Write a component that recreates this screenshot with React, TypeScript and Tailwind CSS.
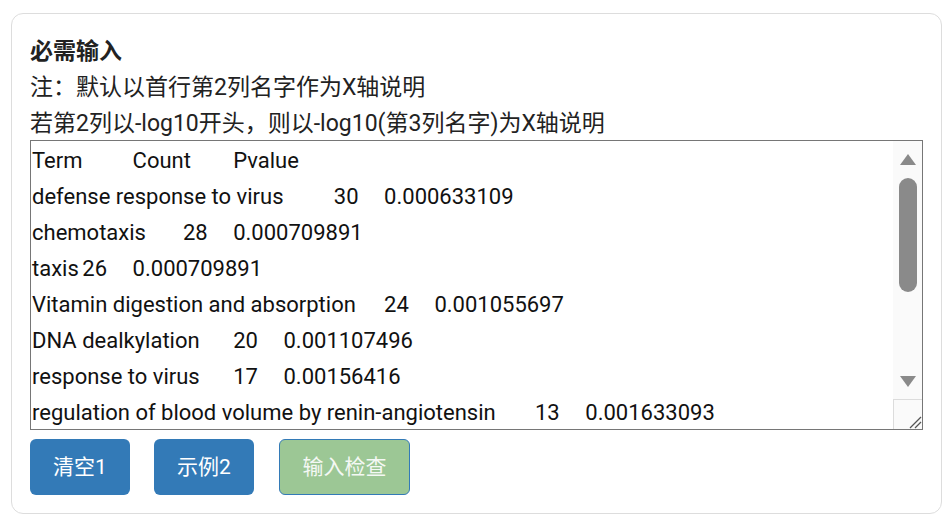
import { useState } from "react";

const SAMPLE = [
  "Term\tCount\tPvalue",
  "defense response to virus\t30\t0.000633109",
  "chemotaxis\t28\t0.000709891",
  "taxis\t26\t0.000709891",
  "Vitamin digestion and absorption\t24\t0.001055697",
  "DNA dealkylation\t20\t0.001107496",
  "response to virus\t17\t0.00156416",
  "regulation of blood volume by renin-angiotensin\t13\t0.001633093",
].join("\n");

const FONT = "font-['Roboto','Noto_Sans_CJK_SC',sans-serif]";

/** 假滚动条：原生滚动条在无头浏览器里太窄，这里画一个跟截图一样的 */
function FakeScrollbar() {
  return (
    <div className="flex w-[29px] shrink-0 flex-col items-center bg-[#fafafa]">
      <svg width="16" height="11" viewBox="0 0 16 11" className="mt-[13px] shrink-0">
        <polygon points="8,0 16,11 0,11" fill="#8a8a8a" />
      </svg>
      <div className="mt-[13px] h-[114px] w-[18px] shrink-0 rounded-full bg-[#8a8a8a]" />
      <div className="flex-1" />
      <svg width="16" height="11" viewBox="0 0 16 11" className="mb-[12px] shrink-0">
        <polygon points="0,0 16,0 8,11" fill="#8a8a8a" />
      </svg>
      <div className="relative h-[30px] w-full border-l border-t border-[#dcdcdc] bg-[#fafafa]">
        <svg width="14" height="14" viewBox="0 0 14 14" className="absolute bottom-0 right-0">
          <line x1="2" y1="13" x2="13" y2="2" stroke="#555" strokeWidth="1.2" />
          <line x1="7" y1="13" x2="13" y2="7" stroke="#555" strokeWidth="1.2" />
        </svg>
      </div>
    </div>
  );
}

export default function App() {
  const [text, setText] = useState(SAMPLE);

  return (
    <div className={`min-h-screen bg-white pl-[11px] pr-[10px] pt-[13px] text-[#222] ${FONT}`}>
      <div className="rounded-[12px] border border-[#dddddd] px-[18px] pb-[18px] pt-[18px]">
        <div className="pt-[2px] text-[23px] leading-[36px]">
          <div className="font-bold">必需输入</div>
          <div>注：默认以首行第2列名字作为X轴说明</div>
          <div className="h-[34px]">若第2列以-log10开头，则以-log10(第3列名字)为X轴说明</div>
        </div>

        <div className="flex h-[290px] border border-[#767676]">
          <textarea
            value={text}
            onChange={(e) => setText(e.target.value)}
            spellCheck={false}
            className={`flex-1 resize-none overflow-hidden whitespace-pre bg-white px-[1px] pb-0 pt-[2px] text-[22px] leading-[36px] text-[#111] outline-none [tab-size:50.3px] ${FONT}`}
          />
          <FakeScrollbar />
        </div>

        <div className="mt-[9px] flex gap-[24px]">
          <button className="h-[56px] w-[100px] rounded-[6px] bg-[#337ab7] pt-[1px] text-[21px] text-white">清空1</button>
          <button className="h-[56px] w-[100px] rounded-[6px] bg-[#337ab7] pt-[1px] text-[21px] text-white">示例2</button>
          <button className="ml-[1px] h-[56px] w-[131px] rounded-[6px] border border-[#337ab7] bg-[#9cc795] pt-[1px] text-[21px] text-[#f4f8f4]">
            输入检查
          </button>
        </div>
      </div>
    </div>
  );
}
